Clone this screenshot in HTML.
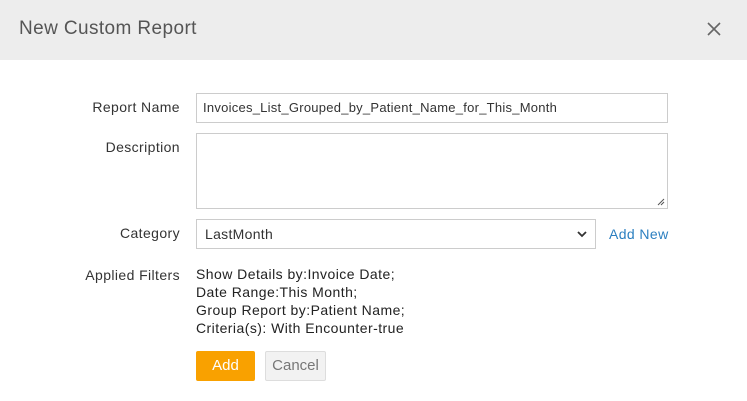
<!DOCTYPE html>
<html><head><style>
body{margin:0;width:747px;height:401px;background:#fff;font-family:"Liberation Sans",sans-serif;position:relative;overflow:hidden;color:#333}
.hd{position:absolute;left:0;top:0;width:747px;height:60px;background:#ededed}
.t{position:absolute;left:19px;top:18px;font-size:19px;color:#555;font-weight:300;letter-spacing:0.4px}
.x{position:absolute;left:706px;top:21px}
.lab{position:absolute;right:567px;font-size:14px;letter-spacing:0.4px;color:#333;text-align:right;white-space:nowrap}
.box{position:absolute;border:1px solid #ccc;box-sizing:border-box;background:#fff;font-size:13px;color:#333}
.f{position:absolute;left:196px;top:265px;font-size:14px;letter-spacing:0.45px;line-height:18px;color:#222}
.btn{position:absolute;top:351px;height:30px;box-sizing:border-box;border-radius:2px;font-size:15px;text-align:center;line-height:30px}
</style></head><body>
<div class="hd"><div class="t">New Custom Report</div>
<svg class="x" width="16" height="16" viewBox="0 0 16 16"><path d="M2 2L14 14M14 2L2 14" stroke="#666" stroke-width="1.6"/></svg></div>
<div class="lab" style="top:99px">Report Name</div>
<div class="box" style="left:196px;top:93px;width:472px;height:30px;padding:6px 0 0 6px;letter-spacing:0.25px">Invoices_List_Grouped_by_Patient_Name_for_This_Month</div>
<div class="lab" style="top:139px">Description</div>
<div class="box" style="left:196px;top:133px;width:472px;height:76px"><svg style="position:absolute;right:2px;bottom:2px" width="8" height="8"><path d="M7 1L1 7M7 4L4 7" stroke="#555"/></svg></div>
<div class="lab" style="top:225px">Category</div>
<div class="box" style="left:196px;top:219px;width:400px;height:30px;padding:6px 0 0 8px;font-size:14px;letter-spacing:0.3px">LastMonth<svg style="position:absolute;right:8px;top:11px" width="10" height="7"><path d="M1 1L5 5L9 1" stroke="#333" stroke-width="1.8" fill="none"/></svg></div>
<div style="position:absolute;left:609px;top:226px;font-size:14px;letter-spacing:0.4px;color:#2b7fc0">Add New</div>
<div class="lab" style="top:267px">Applied Filters</div>
<div class="f">Show Details by:Invoice Date;<br>Date Range:This Month;<br>Group Report by:Patient Name;<br>Criteria(s): With Encounter-true</div>
<div class="btn" style="left:196px;width:59px;background:#f9a100;color:#fff">Add</div>
<div class="btn" style="left:265px;width:61px;background:#f2f2f2;border:1px solid #ddd;color:#777;line-height:28px">Cancel</div>
</body></html>
